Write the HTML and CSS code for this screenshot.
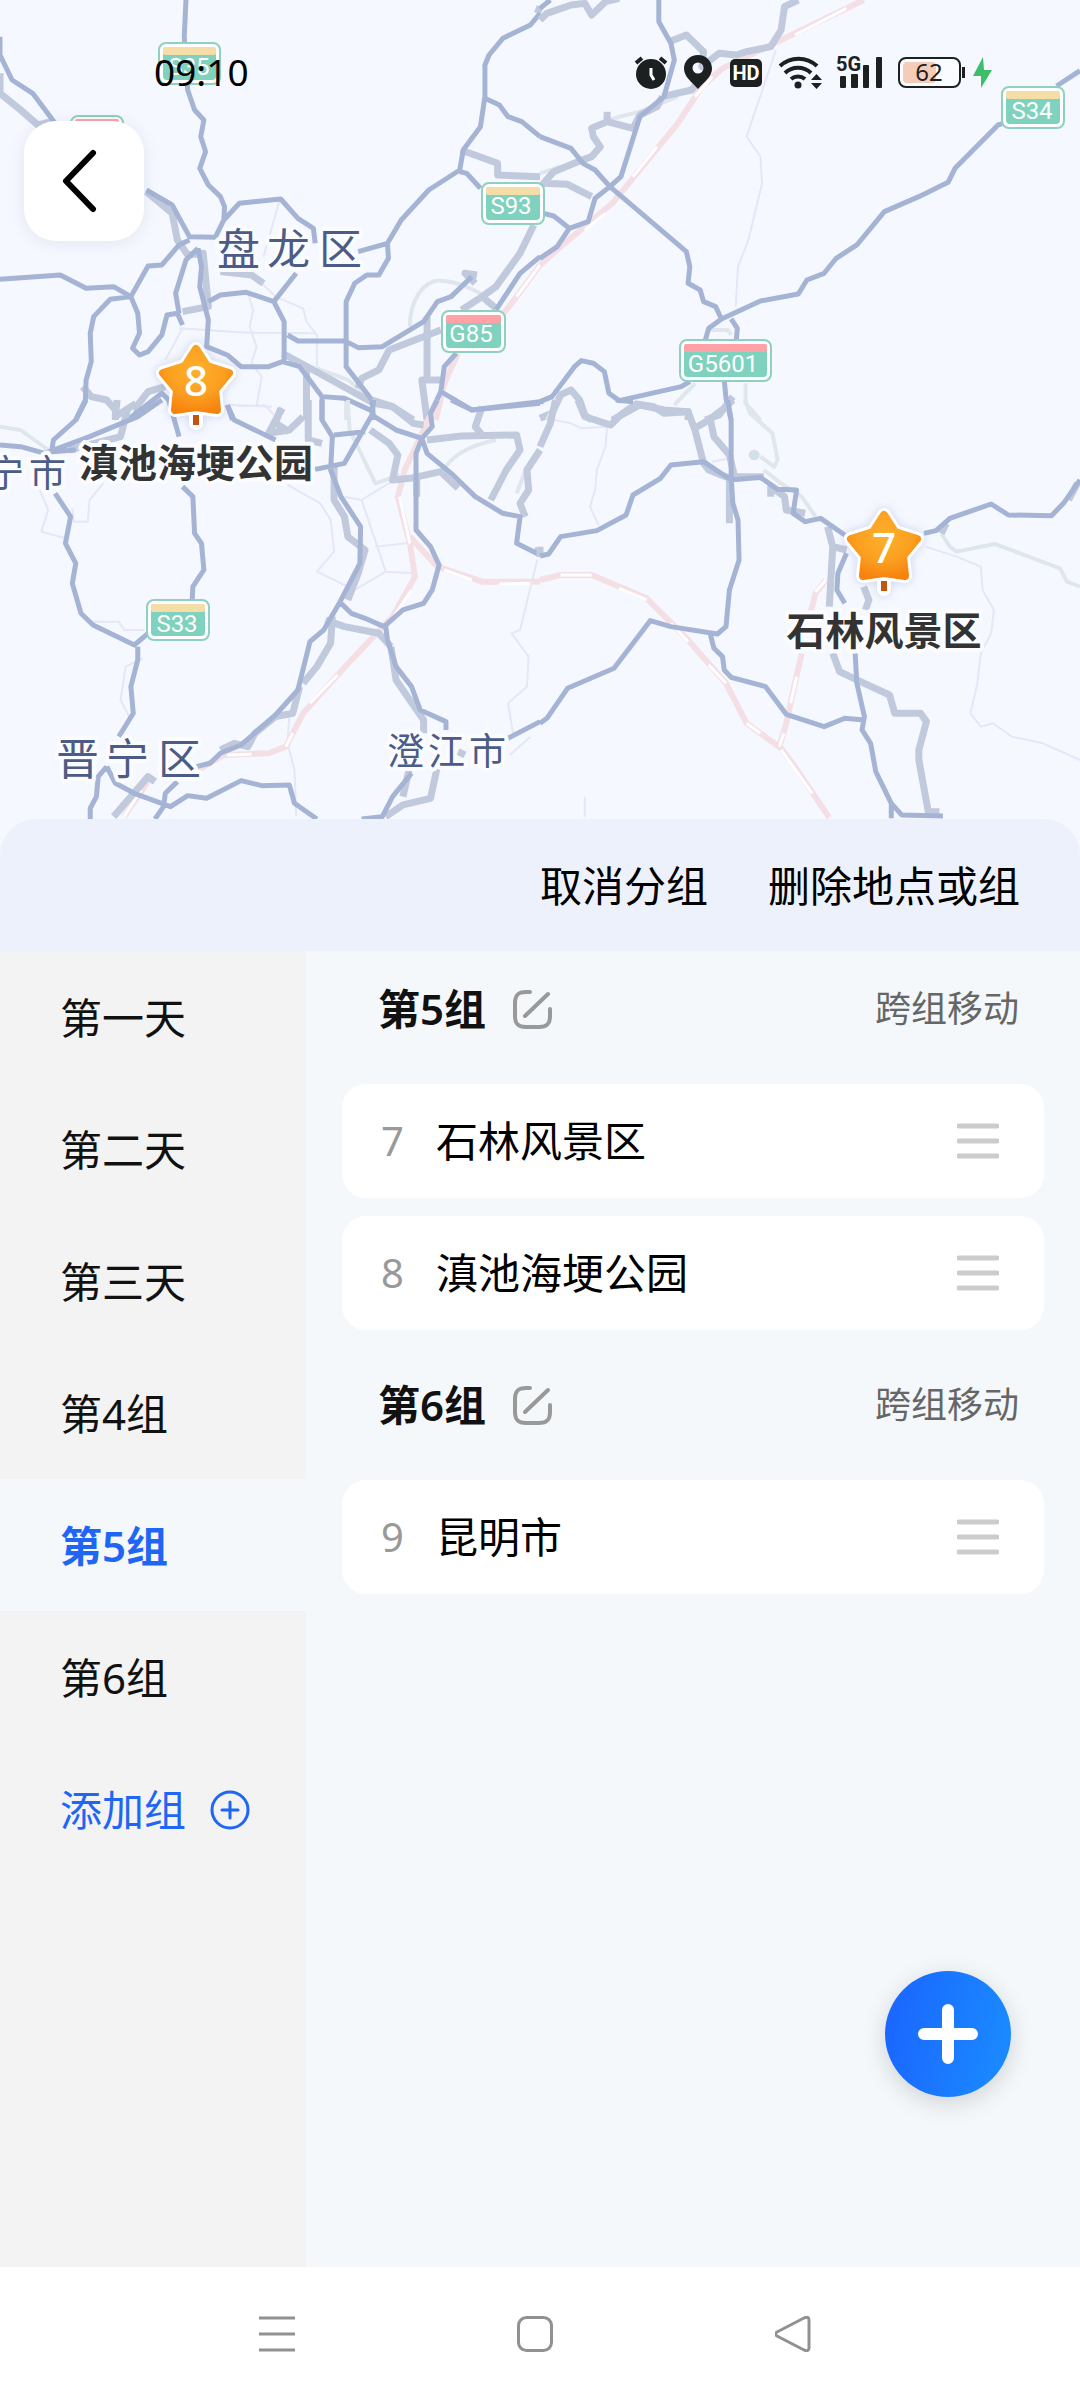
FILE: index.html
```html
<!DOCTYPE html>
<html lang="zh-CN">
<head>
<meta charset="utf-8">
<meta name="viewport" content="width=device-width, initial-scale=1">
<title>行程分组</title>
<link rel="stylesheet" href="styles.css">
</head>
<body>
<div class="app">
  <section class="map" aria-label="地图">
    <svg class="map-canvas" viewBox="0 0 1080 819" preserveAspectRatio="xMidYMid slice">
      <defs>
        <radialGradient id="star-fill" cx="0.5" cy="0.35" r="0.7">
          <stop offset="0" stop-color="#fdb02b"/>
          <stop offset="0.6" stop-color="#fb9f20"/>
          <stop offset="1" stop-color="#f7830f"/>
        </radialGradient>
        <g id="star">
          <path d="M0 72V82" stroke="#fff" stroke-width="14" stroke-linecap="round"/>
          <path class="star-edge" d="M0 8L11 25 33 32 19 49 21 69 0 66 -21 69 -19 49 -33 32 -11 25Z"/>
          <path class="star-body" d="M0 8L11 25 33 32 19 49 21 69 0 66 -21 69 -19 49 -33 32 -11 25Z"/>
          <path d="M0 74V84" stroke="#c4530f" stroke-width="6"/>
        </g>
      </defs>

      <!-- Map sheets: north-west, north-east, south-west, south-east -->
      <g transform="scale(.3444 .3333)">
        <path class="faint" d="M812 600L765 770M720 880L735 930 725 980 745 1040 730 1090 760 1130 745 1218M520 985L720 998 920 1000M760 850L800 890 880 925 890 965 920 1005 920 1100M530 985L480 1080M690 1218L770 1216 800 1250"/>
        <path class="tram" d="M1190 980C1190 900 1230 840 1280 842S1380 870 1410 890M920 1105L1010 1140 1060 1180M1005 1200V1260"/>
        <path class="rail" d="M1568 795L1500 890 1440 970M1330 1060L1290 1150 1265 1260"/>
        <path class="rail-gap" d="M1568 795L1500 890"/>
        <path class="grey" d="M0 220V280L60 330 110 375 150 365M425 575L500 640 515 720 545 765 590 760 605 920 530 935M1568 20L1560 40M1338 450L1445 490V525L1568 530M1550 675L1510 760 1440 860 1400 890 1340 930M1400 890L1440 925M1385 825L1350 820 1380 850M1240 950V1140M1280 1140H1225L1240 1260M1280 990L1130 1050 1100 1110 1050 1135 1040 1165M640 815L730 825 765 850M820 1060L910 1110 1085 1210 1140 1220 1200 1260M890 1110V1260M240 1160L265 1190 310 1200 335 1230V1260M480 1160L430 1175 400 1215 395 1250M800 1260L820 1225"/>
        <path class="blue" d="M540 0L535 110 545 270 565 330 592 360 583 410 597 455 580 505 605 555 640 590 652 620 650 660 695 610 815 597 865 655 910 685 915 730M0 110V165L35 240 95 280 160 370M425 570L500 615 550 710 625 712 650 660M1568 40L1540 75 1460 115 1420 165 1408 195V290L1395 380 1345 450 1335 510 1245 570 1165 660 1125 730 1040 755M1408 295L1450 315 1475 350 1515 365 1568 410M1335 515L1355 520 1395 565M1125 730L1128 775 1100 825 1065 825 1030 850 1005 905V1100L1080 1200 1085 1260M0 838L175 825 250 865 330 860 380 890 430 798 470 795 520 735 550 720M380 890L320 898 272 950 262 1000 265 1085 250 1140 248 1200 220 1260M380 890L400 940 405 1000 385 1045 405 1065 430 1055 470 1005 485 945 515 940 530 975M575 745L540 780 510 880 520 940M575 745L585 800 580 860 605 960 600 1040 660 1065 700 1100 780 1100 820 1085 870 1100 935 1190 1000 1195 1085 1235M605 905L640 885 715 877 795 905 860 820M795 905L825 965V1085M835 1005L865 1023 1000 1022 1040 1043 1110 1040 1230 965 1270 905 1310 890 1370 830M1568 770L1510 820 1440 930M1325 1060L1290 1100 1280 1175 1370 1230 1568 1205M1280 1175L1245 1250M935 1190V1260M370 1260L470 1180 490 1200M660 1215L675 1260"/>
      </g>
      <g transform="translate(540 0) scale(.3444 .3333)">
        <path class="faint" d="M685 150L600 410 640 470 645 550 605 720 575 800 568 920"/>
        <path class="tram" d="M195 360L290 335 400 290M450 1150L390 1215M495 990L545 990 555 1005M597 1150V1210L640 1260M0 520L60 500"/>
        <path class="rail" d="M940 0L690 125 530 205 470 260 400 370 210 610 60 740 0 795"/>
        <path class="rail-gap" d="M890 25L740 105M500 230L450 290M340 440L270 530M190 640L130 690"/>
        <path class="grey" d="M0 60L20 40 90 15 130 10 150 45 190 5 230 -5M750 0L710 20 700 90 670 140 600 155 570 165 520 160 470 200 475 155 425 105 375 125M355 290L440 270 480 220M355 290L340 320 290 345 270 385 195 365 195 335M195 365L150 385 155 410 175 440 150 470 110 485 40 515 10 550 80 553 150 590M0 1255L35 1240 60 1185 90 1170 115 1200 130 1245 150 1260M210 1260L290 1215 360 1230 430 1235V1260M480 1260L520 1245 560 1190"/>
        <path class="blue" d="M345 0V65L380 130 390 180 360 290 290 350 235 530 203 560 160 595 140 665 85 685 50 740 0 775M0 410L90 445 125 490 160 510 203 560 425 755 435 800 430 850 465 870 475 905 510 920 527 957 640 903 750 882 775 840 825 820 860 775 920 735 1000 635 1100 590 1185 547 1205 505 1330 375 1345 370M1500 258L1568 212M10 640L40 648 85 685M0 1205L35 1190 100 1100 120 1082 155 1090 187 1115 200 1180 230 1202 410 1160 435 1145M527 957L490 985 480 1020M555 957L573 985 570 1020M535 1140L540 1195 555 1260M0 25L30 0"/>
      </g>
      <g transform="translate(0 400) scale(.3444 .3333)">
        <path class="faint" d="M300 250L260 300 255 365 215 365 210 325M115 270L140 330 120 395 190 415M250 665H345L360 690H420M415 775L365 800 350 900 375 950M835 255L930 310 960 360 970 455 920 515 1030 570 1120 515 1210 520M1120 515L1050 300 1000 290M1050 300L1160 230M1090 440L1180 430M840 950L835 1030 855 1110 860 1250M1560 480L1510 690 1485 700 1535 770 1530 860 1475 910 1490 1000M1540 1010L1480 1065M670 15L790 20"/>
        <path class="tram" d="M0 80L60 90 140 150M1010 0L1015 90 1090 250 1160 225M1280 220C1310 170 1350 140 1440 120M1500 280L1530 200"/>
        <path class="rail" d="M1270 0L1230 90 1175 210 1155 290 1190 430 1205 530 1140 650 1020 780 880 940 830 1040 780 1060 650 1065 575 1110 540 1100M1190 410L1270 500 1400 545 1568 545M430 1145L360 1250"/>
        <path class="rail-gap" d="M1160 290L1190 430M1195 570L1130 670M980 825L900 910M850 1000L830 1040M730 1063L660 1065M1290 510L1370 540M1450 552L1540 550M410 1170L360 1250"/>
        <path class="grey" d="M340 0L335 50 395 10M370 30L350 110 200 150M800 60L780 100 840 90 880 50M895 0V120L935 130M815 25L800 70 840 95M970 200V300L1000 350 1010 410 1060 450 1040 520 1010 600M1080 0L1140 20 1200 70 1230 75M1075 90L1130 130 1155 165 1140 240 1190 235 1280 215 1330 265M1210 240V290M1240 120L1340 108 1500 105 1510 150 1470 210 1425 300M1400 20L1380 80 1400 105M1568 150L1530 210 1535 270 1510 310 1525 350M945 660L1000 680 1100 700 1135 740M965 650L960 730 920 800 880 850M870 860L850 940 800 950 740 1000 720 1040 680 1030 640 1050M1135 740L1150 840 1230 960 1230 1000M1270 1100L1250 1195 1170 1215 1120 1250M1190 1100L1170 1190M450 1145L430 1130 330 1250M1330 1055L1350 1065M1568 460L1550 450"/>
        <path class="blue" d="M250 0L220 60 155 120 150 155 220 150M0 135L60 140 130 160 260 110 400 50 470 0M490 0L520 110M660 15L680 60 740 90 800 120M160 280L205 350 190 430 220 490 210 550 235 640 270 675 390 735 430 700M400 740V780L380 860 387 940 345 1010M530 260L560 290 565 400 585 430 592 510 560 560 558 600M935 0V60L965 110 960 210 990 290 1047 380 1045 490 985 610 940 690 900 725 865 870 800 945 700 1035 640 1060 610 1090 570 1100M1085 0L1080 45 1000 190 915 208M970 105L1060 95M1080 45L1150 90 1225 115 1240 160 1310 220 1380 290 1460 340 1510 350 1500 430 1568 465M1270 0L1250 40 1255 80 1225 115 1208 160V390L1250 440 1275 495 1255 570 1230 610 1170 630 1115 680 1060 655 1020 640 985 605M1310 0L1370 30 1568 10M1120 680L1125 720 1150 800 1195 860 1220 930 1295 965V990M1475 1015L1568 965M1195 1120L1140 1190 1110 1250 1050 1257M310 1100L285 1130 280 1190 262 1225V1258M310 1100L335 1150 390 1180 495 1220 545 1187 600 1195 700 1142 760 1157 840 1155 855 1210 920 1257M515 1145L480 1180 475 1220 450 1257"/>
      </g>
      <g transform="translate(540 400) scale(.3444 .3333)">
        <path class="faint" d="M40 60L90 70 120 85 195 80 190 140 165 210 160 270 145 320 170 375M1120 440L1210 470 1280 500 1285 570 1318 630 1310 700 1280 760 1270 850 1250 940 1280 980 1315 970 1370 1010 1460 1030 1568 1080M130 1190V1250M500 185L550 175"/>
        <path class="tram" d="M595 0L610 40 675 100 690 180 680 200 640 170M650 210L700 250 760 290 800 350M1165 400L1190 440 1210 455 1320 432 1510 505 1530 545 1568 560M50 0L20 60"/>
        <path class="rail" d="M0 540L60 525H150L310 595 430 720 540 850 600 970 700 1045 740 1100 840 1253M830 540L800 580 785 640M760 760L740 850 715 970 695 1040"/>
        <path class="rail-gap" d="M60 525H150M230 565L310 600M380 670L430 725M490 795L540 850M600 970L640 1000M700 1050L790 1180M830 540L800 575M745 830L728 910M708 1000L695 1040"/>
        <path class="grey" d="M0 140L30 70 45 0M110 0L130 50 205 75 240 40 280 12 330 20 360 40 430 35 450 90 475 190 490 210 550 235M450 85L490 60 540 20 560 0M495 60L505 110 550 165 565 230M560 230H650M550 240V370M670 290V260L710 290 715 330 770 340M835 380L850 440 840 620M850 440L890 450M850 760L870 815 920 840 1015 885 1030 940H1105L1122 965 1100 1050V1080L1130 1250M940 560L955 600 945 630M1165 400L1180 370M1120 1235H1160M1535 300L1560 250M0 440V470"/>
        <path class="blue" d="M545 0L555 60V230L560 310 575 360 578 480 550 570 540 680 515 702 380 680 320 662 215 805 80 865 20 955 0 970M0 468L25 462 60 410 165 392 250 345 270 285 350 235 380 195 475 185 555 240 640 232 690 268 745 270 735 340 770 365 815 355 885 405M890 460L865 520 862 570 885 610M915 760L920 850 942 950 935 990 960 1030 975 1115 1020 1210 1050 1245 1170 1248M1020 1210V1255M495 705L505 745 530 770 535 810 555 832 655 860 715 943 825 980 885 955 940 960M1115 400L1150 392 1190 355 1310 312 1360 345 1485 347 1520 310 1568 240M0 5H10M220 0L270 5"/>
        <circle cx="622" cy="165" r="16" fill="#d5dfe8"/>
      </g>

      <!-- Road shields -->
      <g class="shield"><rect class="plate" x="159" y="43" width="61" height="41" rx="7"/><rect class="green" x="163" y="47" width="53" height="33" rx="4"/><rect class="gold" x="163" y="47" width="53" height="8" rx="2"/><text x="189" y="75">S35</text></g>
      <g class="shield"><rect class="plate" x="71" y="116" width="52" height="41" rx="7"/><rect class="red" x="75" y="119" width="44" height="8" rx="2"/></g>
      <g class="shield"><rect class="plate" x="482" y="183" width="62" height="41" rx="7"/><rect class="green" x="486" y="187" width="54" height="33" rx="4"/><rect class="gold" x="486" y="187" width="54" height="8" rx="2"/><text x="511" y="214">S93</text></g>
      <g class="shield"><rect class="plate" x="442" y="311" width="63" height="41" rx="7"/><rect class="green" x="446" y="315" width="55" height="33" rx="4"/><rect class="red" x="446" y="315" width="55" height="8" rx="2"/><text x="471" y="342">G85</text></g>
      <g class="shield"><rect class="plate" x="680" y="340" width="91" height="41" rx="7"/><rect class="green" x="684" y="344" width="83" height="33" rx="4"/><rect class="red" x="684" y="344" width="83" height="8" rx="2"/><text x="723" y="372">G5601</text></g>
      <g class="shield"><rect class="plate" x="1002" y="87" width="62" height="41" rx="7"/><rect class="green" x="1006" y="91" width="54" height="33" rx="4"/><rect class="gold" x="1006" y="91" width="54" height="8" rx="2"/><text x="1032" y="119">S34</text></g>
      <g class="shield"><rect class="plate" x="147" y="600" width="62" height="40" rx="7"/><rect class="green" x="151" y="604" width="54" height="32" rx="4"/><rect class="gold" x="151" y="604" width="54" height="8" rx="2"/><text x="177" y="632">S33</text></g>

      <!-- Districts -->
      <text class="district" x="217 267 319" y="265">盘龙区</text>
      <text class="district" x="56 106 158" y="775">晋宁区</text>
      <text class="district small" x="387 428 469" y="765">澄江市</text>
      <text class="district small" x="-13 29" y="487">宁市</text>

      <!-- Trip stops -->
      <use class="pin" href="#star" x="196" y="341"/>
      <text class="star-no" x="196" y="396">8</text>
      <text class="stop" x="196" y="477">滇池海埂公园</text>
      <use class="pin" href="#star" x="884" y="507"/>
      <text class="star-no" x="884" y="563">7</text>
      <text class="stop" x="884" y="645">石林风景区</text>
    </svg>

    <header class="status">
      <time class="clock">09:10</time>
      <div class="status-icons">
        <svg width="34" height="36" viewBox="0 0 34 36" fill="#1d2021"><circle cx="17" cy="20" r="15"/><path d="M2 9L8 4M26 4L32 9" stroke="#1d2021" stroke-width="4" fill="none"/><path d="M17 14V21L20 26" fill="none" stroke="#fff" stroke-width="3"/></svg>
        <svg width="30" height="36" viewBox="0 0 30 36"><path fill="#1d2021" fill-rule="evenodd" d="M14 1C6 1 0 7 0 14.500C0 23 8 28 14 35C20 28 28 23 28 14.500C28 7 22 1 14 1ZM14 8.500A5.500 5.500 0 1 1 14 19.500A5.500 5.500 0 1 1 14 8.500Z"/></svg>
        <svg width="32" height="36" viewBox="0 0 32 36"><rect y="5" width="32" height="28" rx="5" fill="#1d2021"/><text class="narrow" x="16" y="26" text-anchor="middle" fill="#fff">HD</text></svg>
        <svg width="42" height="36" viewBox="0 0 42 36" fill="none" stroke="#1d2021" stroke-width="4"><path d="M2 12A27 27 0 0 1 39 12M7 19A19 19 0 0 1 33 19M13 25A11 11 0 0 1 27 25"/><g fill="#1d2021" stroke="none"><circle cx="20" cy="31" r="3.500"/><path d="M33 26L38.500 20 44 26ZM33 29H44L38.500 35Z"/></g></svg>
        <svg width="46" height="36" viewBox="0 0 46 36" fill="#1d2021"><text class="narrow" x="0" y="17">5G</text><rect x="4" y="22" width="6" height="12" rx="1"/><rect x="15" y="20" width="7" height="14" rx="1"/><rect x="27" y="11" width="6" height="23" rx="1"/><rect x="40" y="3" width="6" height="31" rx="1"/></svg>
        <svg width="94" height="36" viewBox="0 0 94 36"><rect x="1" y="4" width="61" height="29" rx="7" fill="#fff" fill-opacity=".4" stroke="#1d2021" stroke-width="2"/><rect x="5" y="8" width="33" height="21" rx="4" fill="#f3cdb8"/><rect x="64" y="13" width="3" height="11" fill="#1d2021"/><text class="level" x="31" y="27" text-anchor="middle">62</text><path fill="#3cbf68" d="M85 3L75 22H83V34L94 16H86Z"/></svg>
      </div>
    </header>

    <button class="back" type="button" aria-label="返回">
      <svg width="36" height="64" viewBox="0 0 36 64" fill="none" stroke="#000" stroke-width="6" stroke-linecap="round" stroke-linejoin="round"><path d="M32 4L5 32 32 60"/></svg>
    </button>
  </section>

  <main class="sheet">
    <div class="toolbar">
      <button class="tool" type="button">取消分组</button>
      <button class="tool" type="button">删除地点或组</button>
    </div>
    <div class="columns">
      <nav class="groups" aria-label="分组">
        <button class="tab" type="button">第一天</button>
        <button class="tab" type="button">第二天</button>
        <button class="tab" type="button">第三天</button>
        <button class="tab" type="button">第4组</button>
        <button class="tab active" type="button" aria-current="true">第5组</button>
        <button class="tab" type="button">第6组</button>
        <button class="tab add" type="button">添加组
          <svg width="40" height="40" viewBox="0 0 40 40" fill="none" stroke="#1f66f5" stroke-width="3" stroke-linecap="round"><circle cx="20" cy="20" r="18"/><path d="M12 20H28M20 12V28"/></svg>
        </button>
      </nav>

      <div class="stops">
        <section class="group">
          <div class="group-head">
            <h2>第5组</h2>
            <button class="edit" type="button" aria-label="编辑第5组"><svg width="39" height="39" viewBox="0 0 39 39"><path d="M17 2H13C5 2 2 5 2 13V26C2 34 5 37 13 37H26C34 37 37 34 37 26V19M35 4L12 26"/></svg></button>
            <button class="move" type="button">跨组移动</button>
          </div>
          <ul class="list">
            <li class="card"><span class="no">7</span><span class="name">石林风景区</span><button class="drag" type="button" aria-label="拖动排序"><svg width="42" height="36" viewBox="0 0 42 36"><path d="M2 3H40M2 18H40M2 33H40"/></svg></button></li>
            <li class="card"><span class="no">8</span><span class="name">滇池海埂公园</span><button class="drag" type="button" aria-label="拖动排序"><svg width="42" height="36" viewBox="0 0 42 36"><path d="M2 3H40M2 18H40M2 33H40"/></svg></button></li>
          </ul>
        </section>
        <section class="group">
          <div class="group-head">
            <h2>第6组</h2>
            <button class="edit" type="button" aria-label="编辑第6组"><svg width="39" height="39" viewBox="0 0 39 39"><path d="M17 2H13C5 2 2 5 2 13V26C2 34 5 37 13 37H26C34 37 37 34 37 26V19M35 4L12 26"/></svg></button>
            <button class="move" type="button">跨组移动</button>
          </div>
          <ul class="list">
            <li class="card"><span class="no">9</span><span class="name">昆明市</span><button class="drag" type="button" aria-label="拖动排序"><svg width="42" height="36" viewBox="0 0 42 36"><path d="M2 3H40M2 18H40M2 33H40"/></svg></button></li>
          </ul>
        </section>
      </div>
    </div>
    <button class="fab" type="button" aria-label="添加地点">
      <svg width="60" height="60" viewBox="0 0 60 60" stroke="#fff" stroke-width="12" stroke-linecap="round"><path d="M6 30H54M30 6V54"/></svg>
    </button>
  </main>

  <footer class="system-nav">
    <button type="button" aria-label="最近任务"><svg width="36" height="36" viewBox="0 0 36 36"><path d="M0 2H36M0 18H36M0 34H36"/></svg></button>
    <button type="button" aria-label="主页"><svg width="36" height="36" viewBox="0 0 36 36"><rect x="1.500" y="1.500" width="33" height="33" rx="8"/></svg></button>
    <button type="button" aria-label="返回上一页"><svg width="36" height="36" viewBox="0 0 36 36"><path d="M2 16L29 2Q34 0 34 4V32Q34 36 29 34L2 20Q-1 18 2 16Z"/></svg></button>
  </footer>
</div>
</body>
</html>
```
FILE: styles.css
```css
* {
  box-sizing: border-box;
}

body {
  margin: 0;
  background: #f5f8ff;
  color: #111;
  font-family: "Noto Sans", "Noto Sans CJK SC", sans-serif;
  font-size: 42px;
  line-height: 60px;
}

button {
  margin: 0;
  padding: 0;
  border: 0;
  background: none;
  color: inherit;
  font: inherit;
  cursor: pointer;
}

svg {
  display: block;
  flex: none;
}

.app {
  display: flex;
  flex-direction: column;
  min-height: 100vh;
}

/* Map */
.map {
  position: relative;
  overflow: hidden;
}

.map-canvas {
  width: 100%;
  height: auto;
}

.map-canvas path {
  vector-effect: non-scaling-stroke;
}

.faint,
.tram,
.rail,
.rail-gap,
.grey,
.blue {
  fill: none;
  stroke-linejoin: round;
}

.faint {
  stroke: #e4e7f6;
  stroke-width: 2px;
}

.tram {
  stroke: #dfe6ec;
  stroke-width: 4px;
}

.rail {
  stroke: #f4e0e4;
  stroke-width: 6px;
}

.rail-gap {
  stroke: #fff;
  stroke-width: 3px;
}

.grey {
  stroke: #c1c9dc;
  stroke-width: 7px;
}

.blue {
  stroke: #a5b4d4;
  stroke-width: 5px;
}

.plate {
  fill: #fff;
  stroke: #8fd0bf;
  stroke-width: 2px;
}

.green {
  fill: #7fd2bd;
}

.gold {
  fill: #f5dda7;
}

.red {
  fill: #ffa1a7;
}

.shield text {
  fill: #fff;
  font-family: Roboto, sans-serif;
  font-size: 24px;
  text-anchor: middle;
}

.district,
.stop {
  paint-order: stroke;
  stroke: #fbfcff;
  stroke-width: 8px;
  stroke-linejoin: round;
}

.district {
  fill: #4c5c87;
  font-family: "Noto Sans CJK SC", sans-serif;
  font-size: 43px;
}

.district.small {
  font-size: 37px;
}

.stop {
  fill: #333;
  font-family: "Noto Sans CJK SC", sans-serif;
  font-size: 39px;
  font-weight: 700;
  text-anchor: middle;
}

.pin {
  filter: drop-shadow(0 0 5px rgba(110, 130, 190, 0.3));
}

.star-edge {
  fill: #fff;
  stroke: #fff;
  stroke-width: 14px;
  stroke-linejoin: round;
}

.star-body {
  fill: url(#star-fill);
  stroke: url(#star-fill);
  stroke-width: 8px;
  stroke-linejoin: round;
}

.star-no {
  fill: #fff;
  font-size: 42px;
  font-weight: 500;
  text-anchor: middle;
}

/* Status bar */
.status {
  position: absolute;
  top: 0;
  left: 0;
  right: 0;
  display: flex;
  align-items: center;
  justify-content: space-between;
  padding: 48px 88px 0 154px;
}

.clock {
  color: #000;
  font-size: 37px;
  line-height: 48px;
}

.status-icons {
  display: flex;
  gap: 16px;
}

.status-icons svg {
  overflow: visible;
}

.narrow {
  font-family: "Liberation Sans Narrow", Roboto, sans-serif;
  font-size: 20px;
  font-weight: 700;
}

.level {
  fill: #1d2021;
  font-size: 24px;
}

.back {
  position: absolute;
  top: 121px;
  left: 24px;
  display: flex;
  align-items: center;
  justify-content: center;
  width: 120px;
  height: 120px;
  padding-right: 10px;
  border-radius: 32px;
  background: #fff;
  box-shadow: 0 2px 16px rgba(60, 70, 100, 0.1);
}

/* Sheet */
.sheet {
  position: relative;
  display: flex;
  flex: 1;
  flex-direction: column;
}

.toolbar {
  display: flex;
  align-items: center;
  justify-content: flex-end;
  gap: 60px;
  height: 132px;
  padding: 2px 60px 0;
  border-radius: 36px 36px 0 0;
  background: #edf1fb;
  color: #000;
}

.columns {
  display: flex;
  flex: 1;
  background: #f4f8fb;
}

.groups {
  display: flex;
  flex-direction: column;
  width: 306px;
  background: #f3f3f3;
}

.tab {
  display: flex;
  align-items: center;
  gap: 24px;
  height: 132px;
  padding: 2px 0 0 60px;
  text-align: left;
  white-space: nowrap;
}

.tab.active {
  background: #f4f8fb;
  color: #1f66f5;
  font-weight: 600;
}

.tab.add {
  color: #1f66f5;
}

.stops {
  display: flex;
  flex: 1;
  flex-direction: column;
  gap: 45px;
  padding: 28px 36px 0;
}

.group {
  display: flex;
  flex-direction: column;
  gap: 45px;
}

.group-head {
  display: flex;
  align-items: center;
  padding: 0 25px 0 36px;
}

.group-head h2 {
  margin: 0;
  font-size: 42px;
  font-weight: 600;
}

.edit {
  margin-left: 27px;
}

.edit path {
  fill: none;
  stroke: #999;
  stroke-width: 4px;
  stroke-linecap: round;
}

.move {
  margin-left: auto;
  color: #666;
  font-size: 36px;
}

.list {
  display: flex;
  flex-direction: column;
  gap: 18px;
  margin: 0;
  padding: 0;
  list-style: none;
}

.card {
  display: flex;
  align-items: center;
  height: 114px;
  padding: 0 45px 0 39px;
  border-radius: 24px;
  background: #fff;
  color: #000;
}

.no {
  width: 55px;
  color: #999;
  font-size: 40px;
}

.drag {
  margin-left: auto;
}

.drag path {
  stroke: #ccc;
  stroke-width: 5px;
  stroke-linecap: round;
}

.fab {
  position: absolute;
  right: 69px;
  bottom: 170px;
  display: flex;
  align-items: center;
  justify-content: center;
  width: 126px;
  height: 126px;
  border-radius: 50%;
  background: linear-gradient(100deg, #1a64ff, #1a8dff);
  box-shadow: 0 6px 24px rgba(0, 0, 0, 0.15);
}

/* System navigation */
.system-nav {
  display: flex;
  align-items: center;
  justify-content: center;
  gap: 222px;
  height: 133px;
  padding-right: 10px;
  background: #fff;
}

.system-nav svg {
  fill: none;
  stroke: #919191;
  stroke-width: 3px;
}
```
